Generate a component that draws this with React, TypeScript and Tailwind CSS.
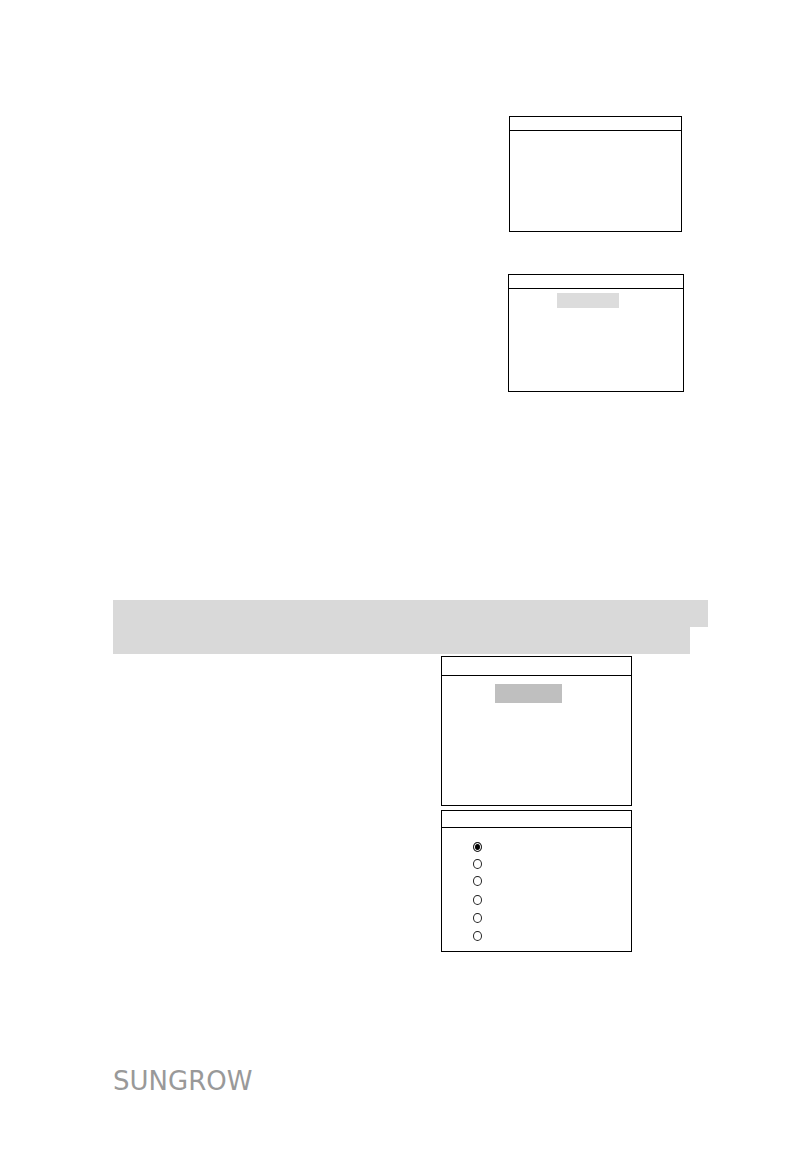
import type { ReactNode } from "react";

type ScreenProps = {
  className: string;
  headerClassName: string;
  children?: ReactNode;
};

function Screen({ className, headerClassName, children }: ScreenProps) {
  return (
    <section className={`max-w-full border border-black bg-white ${className}`}>
      <header className={`border-b border-black ${headerClassName}`} />
      {children}
    </section>
  );
}

function Option({ id, checked = false }: { id: number; checked?: boolean }) {
  return (
    <input
      type="radio"
      name="option"
      aria-label={`Option ${id}`}
      defaultChecked={checked}
      className="m-0 block h-[10px] w-[9px] appearance-none rounded-[50%] border border-[#222222] bg-white checked:bg-black checked:shadow-[inset_0_0_0_1px_white]"
    />
  );
}

export default function App() {
  return (
    <main className="flex min-h-screen flex-col bg-white pt-[116px] pr-[86px] pb-14 pl-[113px] font-['DejaVu_Sans',sans-serif]">
      <div className="flex flex-col items-end gap-[42px] pr-6">
        <Screen className="mr-[2px] h-[116px] w-[173px]" headerClassName="h-[14px]" />
        <Screen className="h-[118px] w-[176px]" headerClassName="h-[14px]">
          <div className="mt-1 ml-12 h-[15px] w-[62px] bg-[#dcdcdc]" />
        </Screen>
      </div>

      <div className="mt-[208px]">
        <div className="h-[27px] bg-[#d9d9d9]" />
        <div className="mr-[18px] h-[27px] bg-[#d9d9d9]" />
      </div>

      <div className="mt-[2px] flex flex-col items-end gap-1 pr-[76px]">
        <Screen className="h-[150px] w-[191px]" headerClassName="h-[19px]">
          <div className="mt-2 ml-[53px] h-[19px] w-[67px] bg-[#bfbfbf]" />
        </Screen>
        <Screen className="h-[142px] w-[191px]" headerClassName="h-[17px]">
          <div className="mt-[14px] ml-[31px] flex flex-col gap-[9px]">
            <div className="flex flex-col gap-[7px]">
              <Option id={1} checked />
              <Option id={2} />
              <Option id={3} />
            </div>
            <div className="flex flex-col gap-2">
              <Option id={4} />
              <Option id={5} />
              <Option id={6} />
            </div>
          </div>
        </Screen>
      </div>

      <footer className="mt-auto text-[26px] leading-7 text-[#999999]">SUNGROW</footer>
    </main>
  );
}
